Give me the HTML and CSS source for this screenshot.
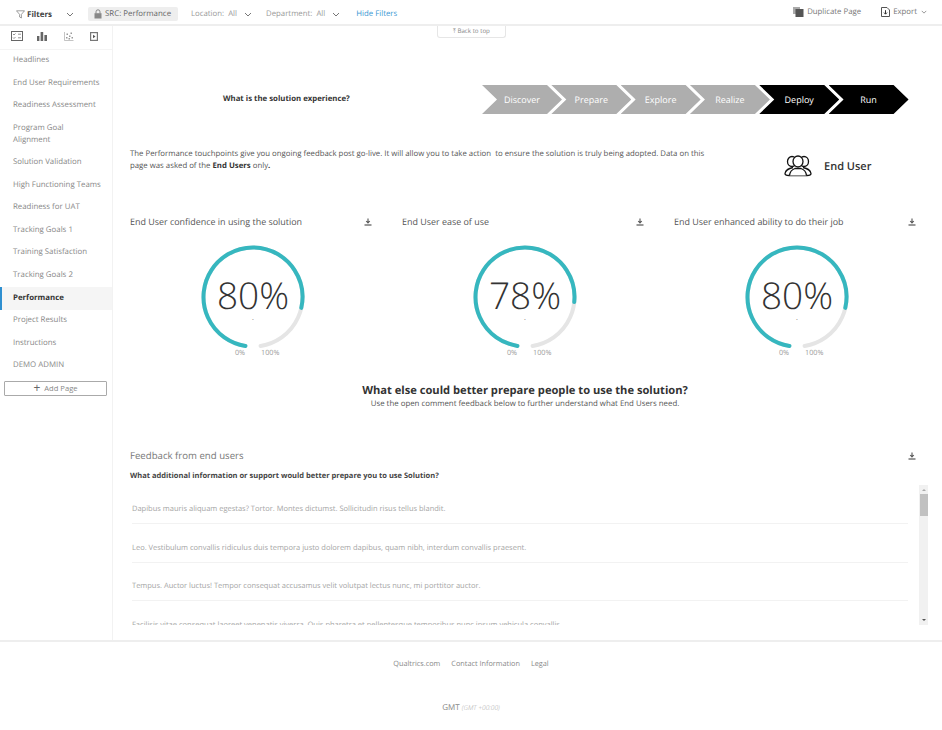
FILE: index.html
```html
<!DOCTYPE html>
<html lang="en">
<head>
    <meta charset="UTF-8">
    <meta name="viewport" content="width=device-width, initial-scale=1.0">
    <title>Performance</title>
    <link rel="stylesheet" href="styles.css">
</head>
<body>
    <svg class="sprites" width="0" height="0">
        <symbol id="download" viewBox="0 0 8 8">
            <path d="M4 0.5V4.6M2.2 3L4 5L5.8 3" fill="none" stroke="currentColor" stroke-width="1.1"/>
            <path d="M0.5 7H7.5" stroke="currentColor" stroke-width="1.2"/>
        </symbol>
        <symbol id="chevron" viewBox="0 0 8 5">
            <path d="M1 1L4 4L7 1" fill="none" stroke="currentColor" stroke-width="1"/>
        </symbol>
        <symbol id="gauge-track" viewBox="0 0 110 110">
            <path d="M47.43 103.9A49.5 49.5 0 1 1 62.57 103.9" fill="none" stroke="#e5e5e5" stroke-width="4" stroke-linecap="round"/>
        </symbol>
    </svg>

    <header class="topbar">
        <div class="filter-title">
            <svg class="funnel" width="9" height="9" viewBox="0 0 9 9"><path d="M0.5 0.8H8.5L5.4 4.4V8L3.6 7V4.4Z" fill="none" stroke="#777" stroke-width="0.7"/></svg>
            <b>Filters</b>
            <svg class="chev chev-filters" width="8" height="5"><use href="#chevron"/></svg>
        </div>
        <div class="pill">
            <svg width="8" height="10" viewBox="0 0 8 10"><path d="M2 4.5V2.8a2 2 0 0 1 4 0V4.5" fill="none" stroke="#888" stroke-width="1"/><rect x="0.5" y="4.2" width="7" height="5.3" fill="#888"/></svg>
            <span>SRC: Performance</span>
        </div>
        <div class="filter filter-location">Location:&nbsp; All <svg class="chev" width="8" height="5"><use href="#chevron"/></svg></div>
        <div class="filter filter-department">Department:&nbsp; All <svg class="chev" width="8" height="5"><use href="#chevron"/></svg></div>
        <a class="hide-filters">Hide Filters</a>
        <div class="actions">
            <div class="action">
                <svg width="11" height="10" viewBox="0 0 11 10"><rect x="0" y="0" width="7" height="7" fill="#aaa"/><rect x="2.5" y="2" width="8" height="8" fill="#555"/></svg>
                Duplicate Page
            </div>
            <div class="action">
                <svg width="9" height="10" viewBox="0 0 9 10"><path d="M0.5 0.5H6L8.5 3V9.5H0.5Z" fill="none" stroke="#555" stroke-width="1"/><path d="M4.5 3.2V7M3 5.6L4.5 7.2L6 5.6" fill="none" stroke="#333" stroke-width="1"/></svg>
                Export
                <svg class="chev chev-export" width="6" height="4"><use href="#chevron"/></svg>
            </div>
        </div>
    </header>

    <div class="middle">
        <nav class="sidebar">
            <div class="side-tabs">
                <svg class="tab-survey" width="12" height="10" viewBox="0 0 12 10"><rect x="0.5" y="0.5" width="11" height="9" fill="none" stroke="#666"/><path d="M2 3L3 4L4.5 2.5M7 3.2H10M2 6.5L3 7.5L4.5 6M7 6.8H10" fill="none" stroke="#777" stroke-width="0.8"/></svg>
                <svg width="10" height="9" viewBox="0 0 10 9"><path d="M0 4H2.4V9H0ZM3.6 0H6.2V9H3.6ZM7.4 3H10V9H7.4Z" fill="#666"/></svg>
                <svg width="10" height="9" viewBox="0 0 10 9"><path d="M0.5 0V8.5H9.5" fill="none" stroke="#aaa" stroke-width="0.7"/><path d="M2 5h1.5v1.5H2zM2.5 1.5h1.5v1.5H2.5zM5 3.5h1.5v1.5H5zM6.5 0.5h1.5v1.5H6.5zM7.5 5h1.5v1.5H7.5zM4.5 6h1.5v1.5H4.5z" fill="#999"/></svg>
                <svg width="8" height="9" viewBox="0 0 8 9"><rect x="0.6" y="0.6" width="6.8" height="7.8" fill="none" stroke="#777" stroke-width="1.2"/><path d="M3 2.8L5.5 4.5L3 6.2Z" fill="#555"/></svg>
            </div>
            <a class="side-item">Headlines</a>
            <a class="side-item">End User Requirements</a>
            <a class="side-item">Readiness Assessment</a>
            <a class="side-item">Program Goal<br>Alignment</a>
            <a class="side-item">Solution Validation</a>
            <a class="side-item">High Functioning Teams</a>
            <a class="side-item">Readiness for UAT</a>
            <a class="side-item">Tracking Goals 1</a>
            <a class="side-item">Training Satisfaction</a>
            <a class="side-item">Tracking Goals 2</a>
            <a class="side-item active">Performance</a>
            <a class="side-item">Project Results</a>
            <a class="side-item">Instructions</a>
            <a class="side-item">DEMO ADMIN</a>
            <button class="add-page"><span class="plus">+</span> Add Page</button>
        </nav>

        <main class="content">
            <a class="back-to-top">⤒ Back to top</a>

            <section class="journey">
                <div class="journey-question">What is the solution experience?</div>
                <div class="steps">
                    <div class="step">Discover</div>
                    <div class="step">Prepare</div>
                    <div class="step">Explore</div>
                    <div class="step">Realize</div>
                    <div class="step current">Deploy</div>
                    <div class="step current">Run</div>
                </div>
            </section>

            <section class="intro">
                <p>The Performance touchpoints give you ongoing feedback post go-live. It will allow you to take action&nbsp; to ensure the solution is truly being adopted. Data on this page was asked of the <b>End Users</b> only<b>.</b></p>
                <div class="audience">
                    <svg width="28" height="22" viewBox="0 0 28 22">
                        <g fill="#fff" stroke="#111" stroke-width="1.3">
                            <ellipse cx="8" cy="6.5" rx="4.5" ry="5"/>
                            <ellipse cx="20" cy="6.5" rx="4.5" ry="5"/>
                            <path d="M9 12.5C5 13.5 1.5 14.5 1 18.5C1 20 2.5 20.5 5 20.5H23C25.5 20.5 27 20 27 18.5C26.5 14.5 23 13.5 19 12.5"/>
                            <ellipse cx="14" cy="6.5" rx="5" ry="5.5"/>
                            <path d="M5.5 20.5C6 16 9.5 14 11 13.5H17C18.5 14 22 16 22.5 20.5"/>
                        </g>
                    </svg>
                    <span>End User</span>
                </div>
            </section>

            <section class="gauges">
                <div class="gauge-card">
                    <div class="card-head"><span>End User confidence in using the solution</span><svg class="dl" width="8" height="8"><use href="#download"/></svg></div>
                    <div class="gauge">
                        <svg width="110" height="110" viewBox="0 0 110 110">
                            <use href="#gauge-track" width="110" height="110"/>
                            <path class="gauge-value" pathLength="100" stroke-dasharray="80 100" d="M47.43 103.9A49.5 49.5 0 1 1 62.57 103.9"/>
                        </svg>
                        <div class="gauge-number">80%</div>
                        <div class="gauge-dot">.</div>
                    </div>
                    <div class="gauge-scale"><span>0%</span><span>100%</span></div>
                </div>
                <div class="gauge-card">
                    <div class="card-head"><span>End User ease of use</span><svg class="dl" width="8" height="8"><use href="#download"/></svg></div>
                    <div class="gauge">
                        <svg width="110" height="110" viewBox="0 0 110 110">
                            <use href="#gauge-track" width="110" height="110"/>
                            <path class="gauge-value" pathLength="100" stroke-dasharray="78 100" d="M47.43 103.9A49.5 49.5 0 1 1 62.57 103.9"/>
                        </svg>
                        <div class="gauge-number">78%</div>
                        <div class="gauge-dot">.</div>
                    </div>
                    <div class="gauge-scale"><span>0%</span><span>100%</span></div>
                </div>
                <div class="gauge-card">
                    <div class="card-head"><span>End User enhanced ability to do their job</span><svg class="dl" width="8" height="8"><use href="#download"/></svg></div>
                    <div class="gauge">
                        <svg width="110" height="110" viewBox="0 0 110 110">
                            <use href="#gauge-track" width="110" height="110"/>
                            <path class="gauge-value" pathLength="100" stroke-dasharray="80 100" d="M47.43 103.9A49.5 49.5 0 1 1 62.57 103.9"/>
                        </svg>
                        <div class="gauge-number">80%</div>
                        <div class="gauge-dot">.</div>
                    </div>
                    <div class="gauge-scale"><span>0%</span><span>100%</span></div>
                </div>
            </section>

            <section class="prompt">
                <h2>What else could better prepare people to use the solution?</h2>
                <p>Use the open comment feedback below to further understand what End Users need.</p>
            </section>

            <section class="feedback">
                <div class="feedback-head"><span>Feedback from end users</span><svg class="dl" width="8" height="8"><use href="#download"/></svg></div>
                <div class="feedback-question">What additional information or support would better prepare you to use Solution?</div>
                <div class="comments-wrap">
                    <div class="comments">
                        <div class="comment">Dapibus mauris aliquam egestas? Tortor. Montes dictumst. Sollicitudin risus tellus blandit.</div>
                        <div class="comment">Leo. Vestibulum convallis ridiculus duis tempora justo dolorem dapibus, quam nibh, interdum convallis praesent.</div>
                        <div class="comment">Tempus. Auctor luctus! Tempor consequat accusamus velit volutpat lectus nunc, mi porttitor auctor.</div>
                        <div class="comment">Facilisis vitae consequat laoreet venenatis viverra. Quis pharetra et pellentesque temporibus nunc ipsum vehicula convallis.</div>
                    </div>
                    <div class="scrollbar">
                        <span class="arrow arrow-up"></span>
                        <span class="thumb"></span>
                        <span class="arrow arrow-down"></span>
                    </div>
                </div>
            </section>
        </main>
    </div>

    <footer class="footer">
        <div class="footer-links">
            <a>Qualtrics.com</a>
            <a>Contact Information</a>
            <a>Legal</a>
        </div>
        <div class="timezone">GMT <i>(GMT +00:00)</i></div>
    </footer>
</body>
</html>
```

FILE: styles.css
```css
* {
    box-sizing: border-box;
}

body {
    font-family: 'Open Sans', Arial, sans-serif;
    background-color: #ffffff;
    color: #444444;
    margin: 0;
    padding: 0;
    width: 942px;
    height: 730px;
    overflow: hidden;
    display: flex;
    flex-direction: column;
    text-rendering: geometricPrecision;
}

.sprites {
    position: absolute;
}

/* Top bar */
.topbar {
    height: 26px;
    flex: none;
    display: flex;
    align-items: center;
    font-size: 7.8px;
    color: #999999;
    border-bottom: 2px solid #eeeeee;
    padding: 4px 15px 0 16px;
}

.filter-title {
    display: flex;
    align-items: center;
    width: 72px;
    color: #444444;
}

.filter-title b {
    margin-left: 2px;
    font-size: 8px;
}

.chev {
    color: #777777;
    margin-left: 5px;
}

.chev-filters {
    margin-left: 14px;
}

.pill {
    display: flex;
    align-items: center;
    gap: 3px;
    width: 90px;
    height: 14px;
    padding-left: 6px;
    background-color: #eeeeee;
    border-radius: 2px;
    color: #666666;
    font-size: 7.9px;
    white-space: nowrap;
}

.filter {
    display: flex;
    align-items: center;
    white-space: pre;
}

.filter-location {
    margin-left: 13px;
}

.filter-department {
    margin-left: 14px;
}

.hide-filters {
    margin-left: 16px;
    color: #3b97d3;
}

.actions {
    margin-left: auto;
    display: flex;
    gap: 20px;
    color: #777777;
    margin-top: -5px;
}

.action {
    display: flex;
    align-items: center;
    gap: 3px;
}

.chev-export {
    margin-left: 1px;
}

/* Sidebar + content */
.middle {
    height: 616px;
    flex: none;
    display: flex;
    overflow: hidden;
    border-bottom: 2px solid #eeeeee;
}

.sidebar {
    width: 113px;
    flex: none;
    border-right: 1px solid #f2f2f2;
}

.side-tabs {
    height: 23.7px;
    display: flex;
    align-items: center;
    gap: 16.5px;
    padding: 0 0 2px 11px;
    border-bottom: 1px solid #f4f4f4;
}

.tab-survey {
    margin-right: -2.5px;
}

.side-item {
    display: block;
    padding: 5.55px 4px 5.55px 13px;
    font-size: 7.85px;
    line-height: 11.5px;
    color: #888888;
}

.side-item.active {
    background-color: #f5f5f5;
    border-left: 2px solid #2e8fd0;
    padding-left: 11px;
    color: #333333;
    font-weight: 700;
}

.add-page {
    display: block;
    width: 103px;
    height: 15px;
    margin: 3px 0 0 4px;
    padding: 0;
    background-color: #ffffff;
    border: 1px solid #aaaaaa;
    border-radius: 1px;
    font-family: inherit;
    font-size: 7.6px;
    line-height: 12px;
    color: #888888;
}

.plus {
    font-size: 12px;
    line-height: 12px;
    color: #666666;
    vertical-align: -1px;
    margin-right: 2px;
}

.content {
    flex: 1;
    position: relative;
    padding-left: 17px;
    min-width: 0;
}

.back-to-top {
    position: absolute;
    left: 324px;
    top: -1px;
    width: 69px;
    height: 13px;
    background-color: #ffffff;
    border: 1px solid #e6e6e6;
    border-top: none;
    border-radius: 0 0 3px 3px;
    font-size: 6.2px;
    line-height: 12px;
    text-align: center;
    color: #888888;
}

/* Journey steps */
.journey {
    display: flex;
    align-items: center;
    padding-top: 59px;
    height: 88px;
}

.journey-question {
    width: 352px;
    padding-left: 93px;
    margin-top: -2px;
    font-size: 7.8px;
    font-weight: 700;
    color: #333333;
}

.steps {
    display: flex;
}

.step {
    width: 80px;
    height: 29px;
    flex: none;
    margin-right: -10.7px;
    display: flex;
    align-items: center;
    justify-content: center;
    background-color: #aeaeae;
    color: #ffffff;
    font-size: 9px;
    clip-path: polygon(0 0, 65px 0, 100% 50%, 65px 100%, 0 100%, 15px 50%);
}

.step.current {
    background-color: #000000;
}

/* Intro */
.intro {
    display: flex;
    margin-top: 33px;
    height: 67.5px;
}

.intro p {
    width: 580px;
    margin: 0;
    font-size: 7.8px;
    line-height: 12px;
    color: #555555;
    padding-top: 1px;
}

.intro p b {
    color: #333333;
}

.audience {
    display: flex;
    align-items: center;
    gap: 12px;
    margin: 0 0 auto 74px;
    padding-top: 8px;
    font-size: 11px;
    font-weight: 600;
    color: #333333;
}

/* Gauges */
.gauges {
    display: grid;
    grid-template-columns: repeat(3, 272px);
}

.gauge-card {
    width: 243px;
}

.card-head {
    display: flex;
    justify-content: space-between;
    align-items: center;
    height: 14px;
    font-size: 8.93px;
    color: #555555;
    padding-right: 1px;
}

.dl {
    color: #555555;
    flex: none;
}

.gauge {
    position: relative;
    width: 110px;
    height: 110px;
    margin: 13px 0 0 68px;
}

.gauge-value {
    fill: none;
    stroke: #36b7bf;
    stroke-width: 4;
    stroke-linecap: round;
}

.gauge-number {
    position: absolute;
    left: 0;
    right: 0;
    top: 28.5px;
    text-align: center;
    font-size: 37px;
    line-height: 50px;
    font-weight: 300;
    color: #333333;
}

.gauge-dot {
    position: absolute;
    left: 0;
    right: 0;
    top: 73.5px;
    text-align: center;
    font-size: 7px;
    line-height: 8px;
    color: #666666;
}

.gauge-scale {
    display: flex;
    gap: 16px;
    margin: -3.5px 0 0 105px;
    font-size: 7.2px;
    line-height: 10px;
    color: #999999;
}

/* Prompt */
.prompt {
    margin-top: 26px;
    padding-right: 22px;
    text-align: center;
}

.prompt h2 {
    margin: 0;
    font-size: 11.15px;
    line-height: 14.5px;
    font-weight: 700;
    color: #333333;
}

.prompt p {
    margin: 0;
    font-size: 7.85px;
    line-height: 11px;
    color: #555555;
}

/* Feedback list */
.feedback {
    margin-top: 39px;
    padding-right: 14px;
}

.feedback-head {
    display: flex;
    justify-content: space-between;
    align-items: center;
    height: 14px;
    font-size: 9.65px;
    color: #777777;
    padding-right: 12px;
}

.feedback-question {
    margin-top: 7px;
    font-size: 7.53px;
    line-height: 12px;
    font-weight: 700;
    color: #444444;
}

.comments-wrap {
    display: flex;
    margin-top: 3px;
    height: 140px;
}

.comments {
    width: 776px;
    flex: none;
    margin: 1px 0 0 2px;
    height: 139px;
    overflow: hidden;
}

.comment {
    height: 38.5px;
    padding-top: 17.5px;
    border-bottom: 1px solid #f2f2f2;
    font-size: 7.5px;
    line-height: 12px;
    color: #a5a5a5;
    white-space: nowrap;
}

.scrollbar {
    width: 9px;
    flex: none;
    margin-left: 11px;
    background-color: #f1f1f1;
    position: relative;
}

.thumb {
    position: absolute;
    top: 9px;
    left: 1px;
    width: 8px;
    height: 22px;
    background-color: #c1c1c1;
}

.arrow {
    position: absolute;
    left: 2.5px;
    border-left: 2px solid transparent;
    border-right: 2px solid transparent;
}

.arrow-up {
    top: 4px;
    border-bottom: 2px solid #aaaaaa;
}

.arrow-down {
    bottom: 4px;
    border-top: 2px solid #555555;
}

/* Footer */
.footer {
    flex: 1;
    text-align: center;
    color: #888888;
}

.footer-links {
    display: flex;
    justify-content: center;
    gap: 11px;
    margin: 16px 0 0 0;
    font-size: 7.3px;
    line-height: 12px;
}

.timezone {
    margin-top: 32px;
    font-size: 8px;
    line-height: 12px;
}

.timezone i {
    font-size: 6.6px;
    color: #aaaaaa;
    font-weight: 300;
}
```
